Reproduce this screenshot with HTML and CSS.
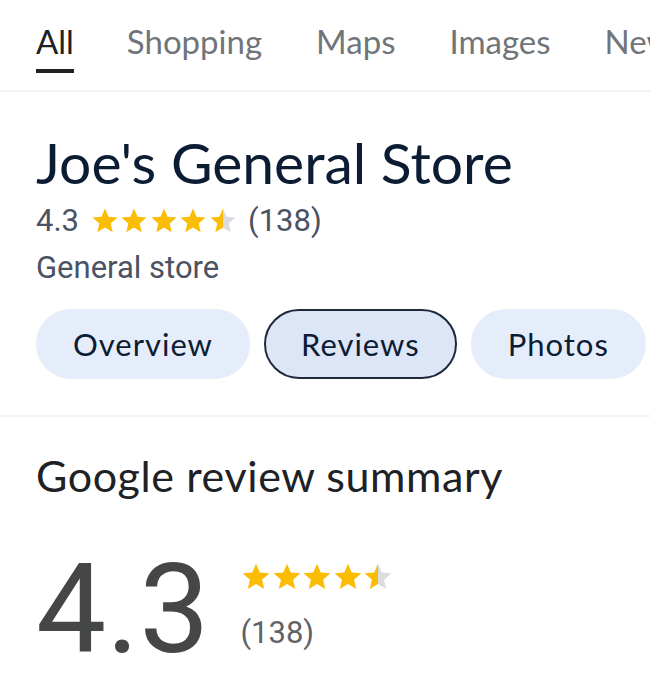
FILE: index.html
```html
<!DOCTYPE html>
<html lang="en">

<head>
    <meta charset="UTF-8">
    <meta name="viewport" content="width=device-width, initial-scale=1.0">
    <title>Joe's General Store</title>
    <link rel="stylesheet" href="styles.css">
</head>

<body>
    <svg width="0" height="0" class="defs">
        <defs>
            <symbol id="star" viewBox="0 0 24 24">
                <path d="M12 17.27L18.18 21l-1.64-7.03L22 9.24l-7.19-.61L12 2 9.19 8.63 2 9.24l5.46 4.73L5.82 21z" />
            </symbol>
            <linearGradient id="half">
                <stop offset="50%" stop-color="#fbbc04" />
                <stop offset="50%" stop-color="#dadce0" />
            </linearGradient>
            <symbol id="halfstar" viewBox="0 0 24 24">
                <path fill="url(#half)" d="M12 17.27L18.18 21l-1.64-7.03L22 9.24l-7.19-.61L12 2 9.19 8.63 2 9.24l5.46 4.73L5.82 21z" />
            </symbol>
        </defs>
    </svg>

    <div class="tabs">
        <div class="tab active">All</div>
        <div class="tab">Shopping</div>
        <div class="tab">Maps</div>
        <div class="tab">Images</div>
        <div class="tab">News</div>
    </div>

    <div class="place">
        <h1 class="title">Joe's General Store</h1>
        <div class="rating">
            <span class="score">4.3</span>
            <span class="stars">
                <svg><use href="#star" /></svg>
                <svg><use href="#star" /></svg>
                <svg><use href="#star" /></svg>
                <svg><use href="#star" /></svg>
                <svg><use href="#halfstar" /></svg>
            </span>
            <span class="count">(138)</span>
        </div>
        <div class="category">General store</div>

        <div class="chips">
            <div class="chip">Overview</div>
            <div class="chip selected">Reviews</div>
            <div class="chip">Photos</div>
        </div>
    </div>

    <div class="summary">
        <h2 class="summary-title">Google review summary</h2>
        <div class="summary-row">
            <div class="big-score">4.3</div>
            <div class="summary-side">
                <span class="stars small">
                    <svg><use href="#star" /></svg>
                    <svg><use href="#star" /></svg>
                    <svg><use href="#star" /></svg>
                    <svg><use href="#star" /></svg>
                    <svg><use href="#halfstar" /></svg>
                </span>
                <span class="summary-count">(138)</span>
            </div>
        </div>
    </div>
</body>

</html>
```

FILE: styles.css
```css
body {
    margin: 0;
    padding: 0;
    background: #fff;
    font-family: Roboto, "Liberation Sans", sans-serif;
    overflow: hidden;
}

* {
    box-sizing: border-box;
}

.defs {
    position: absolute;
}

.tabs {
    display: flex;
    gap: 54px;
    padding: 0 36px;
    height: 92px;
    border-bottom: 2px solid #f2f2f2;
    white-space: nowrap;
}

.tab {
    font-family: Lato, "Open Sans", sans-serif;
    font-size: 33px;
    line-height: 36px;
    padding-top: 23px;
    color: #70757a;
}

.tab.active {
    color: #202124;
    margin-right: -1px;
}

.tab.active::after {
    content: "";
    display: block;
    height: 4px;
    margin-top: 10px;
    background: #202124;
}

.place {
    padding: 0 0 0 36px;
    border-bottom: 2px solid #f2f2f2;
}

.title {
    margin: 0;
    padding-top: 38px;
    font-family: Lato, "Open Sans", sans-serif;
    font-weight: 400;
    font-size: 57px;
    line-height: 64px;
    color: #0b1c33;
}

.rating {
    display: flex;
    align-items: center;
    gap: 11px;
    margin-top: 7px;
    font-size: 31px;
    line-height: 40px;
    color: #4b5263;
}

.stars {
    display: flex;
}

.stars svg {
    width: 30px;
    height: 30px;
    margin-right: -0.6px;
    fill: #fbbc04;
}

.category {
    font-size: 31px;
    line-height: 40px;
    margin-top: 7px;
    color: #4b5263;
}

.chips {
    display: flex;
    gap: 14px;
    padding: 21px 0 36px;
    white-space: nowrap;
}

.chip {
    flex: none;
    height: 70px;
    padding: 0 35px;
    border-radius: 35px;
    background: #e6edfa;
    border: 2px solid #e6edfa;
    display: flex;
    align-items: center;
    font-family: Lato, "Open Sans", sans-serif;
    font-size: 31px;
    letter-spacing: 1px;
    color: #0b1c33;
}

.chip.selected {
    background: #dde6f6;
    border-color: #1d2a3d;
}

.summary {
    padding: 0 36px;
}

.summary-title {
    margin: 0;
    padding-top: 35px;
    font-family: Lato, "Open Sans", sans-serif;
    font-weight: 400;
    font-size: 43px;
    line-height: 48px;
    letter-spacing: 0.6px;
    color: #202124;
}

.summary-row {
    display: flex;
    gap: 31px;
    margin-top: 50px;
}

.big-score {
    font-size: 125px;
    line-height: 120px;
    color: #444746;
}

.summary-side {
    display: flex;
    flex-direction: column;
    padding-top: 11px;
}

.stars.small svg {
    width: 32px;
    height: 32px;
    margin-right: -1.6px;
}

.summary-count {
    margin-top: 22px;
    font-size: 31px;
    line-height: 36px;
    color: #5f6368;
}
```
